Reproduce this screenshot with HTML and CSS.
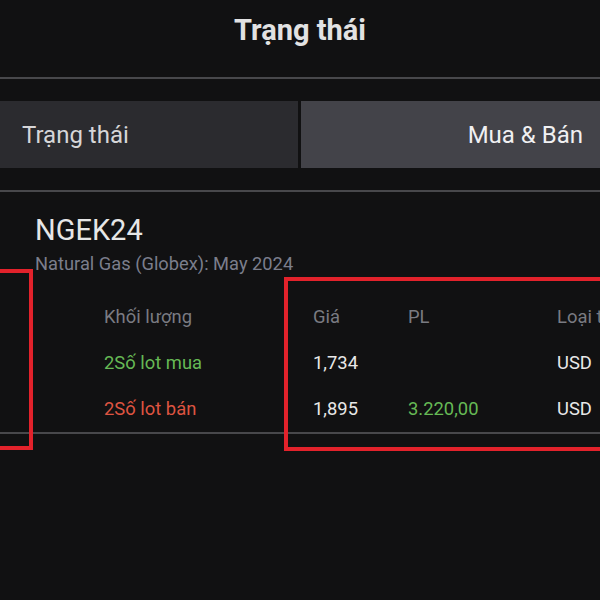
FILE: index.html
```html
<!DOCTYPE html>
<html lang="vi">
<head>
<meta charset="utf-8">
<link rel="stylesheet" href="styles.css">
</head>
<body>
<div class="screen">
  <header class="topbar"><h1 class="title">Trạng thái</h1></header>
  <div class="tabs-wrap">
    <div class="tabs">
      <div class="tab tab-left">Trạng thái</div>
      <div class="tab tab-right">Mua &amp; Bán</div>
    </div>
  </div>
  <section class="content">
    <div class="symbol">NGEK24</div>
    <div class="desc">Natural Gas (Globex): May 2024</div>
    <div class="table">
      <div class="cell head">Khối lượng</div>
      <div class="cell head">Giá</div>
      <div class="cell head">PL</div>
      <div class="cell head">Loại tiền</div>

      <div class="cell buy">2Số lot mua</div>
      <div class="cell">1,734</div>
      <div class="cell"></div>
      <div class="cell">USD</div>

      <div class="cell sell">2Số lot bán</div>
      <div class="cell">1,895</div>
      <div class="cell profit">3.220,00</div>
      <div class="cell">USD</div>
    </div>
  </section>
  <div class="mark mark-left"></div>
  <div class="mark mark-right"></div>
</div>
</body>
</html>
```

FILE: styles.css
```css
* { box-sizing: border-box; }
html, body {
  margin: 0;
  padding: 0;
  background: #111112;
}
body {
  width: 600px;
  height: 600px;
  overflow: hidden;
  font-family: Roboto, "Noto Sans", sans-serif;
}
.screen {
  position: relative;
  width: 600px;
  height: 600px;
  overflow: hidden;
}
.topbar {
  height: 79px;
  border-bottom: 2px solid #48484b;
  display: flex;
  justify-content: center;
  padding-top: 11px;
}
.title {
  margin: 0;
  font-size: 29px;
  font-weight: 700;
  color: #e2e2e2;
  line-height: 38px;
}
.tabs-wrap {
  padding: 22px 0 22px;
  border-bottom: 2px solid #48484b;
}
.tabs {
  display: flex;
  gap: 3px;
  height: 67px;
}
.tab {
  display: flex;
  align-items: center;
  font-size: 24px;
  color: #e4e4e6;
}
.tab-left {
  width: 298px;
  background: #2b2b2f;
  padding-left: 22px;
  color: #d6d6d8;
}
.tab-right {
  flex: 1;
  background: #434349;
  justify-content: flex-end;
  padding-right: 17px;
  color: #f0f0f2;
}
.content {
  padding: 22px 0 0 35px;
}
.symbol {
  font-size: 29px;
  color: #e6e6e6;
  line-height: 32px;
}
.desc {
  font-size: 18.3px;
  color: #7b7e8c;
  line-height: 24px;
  margin-top: 6px;
}
.table {
  display: grid;
  grid-template-columns: 209px 95px 149px 100px;
  grid-auto-rows: 46px;
  margin-left: 69px;
  margin-top: 17px;
  white-space: nowrap;
  font-size: 18.4px;
  color: #e8e8e8;
}
.cell {
  display: flex;
  align-items: center;
}
.head { color: #7a7b82; }
.buy { color: #66b955; }
.sell { color: #de5441; }
.profit { color: #66b955; }
.content::after {
  content: "";
  display: block;
  height: 2px;
  background: #48484b;
  margin-left: -35px;
  margin-top: 1px;
}
.mark {
  position: absolute;
  border: 4px solid #e3222b;
}
.mark-left {
  left: -10px;
  top: 269px;
  width: 43px;
  height: 181px;
}
.mark-right {
  left: 284px;
  top: 277px;
  width: 330px;
  height: 174px;
}
```
